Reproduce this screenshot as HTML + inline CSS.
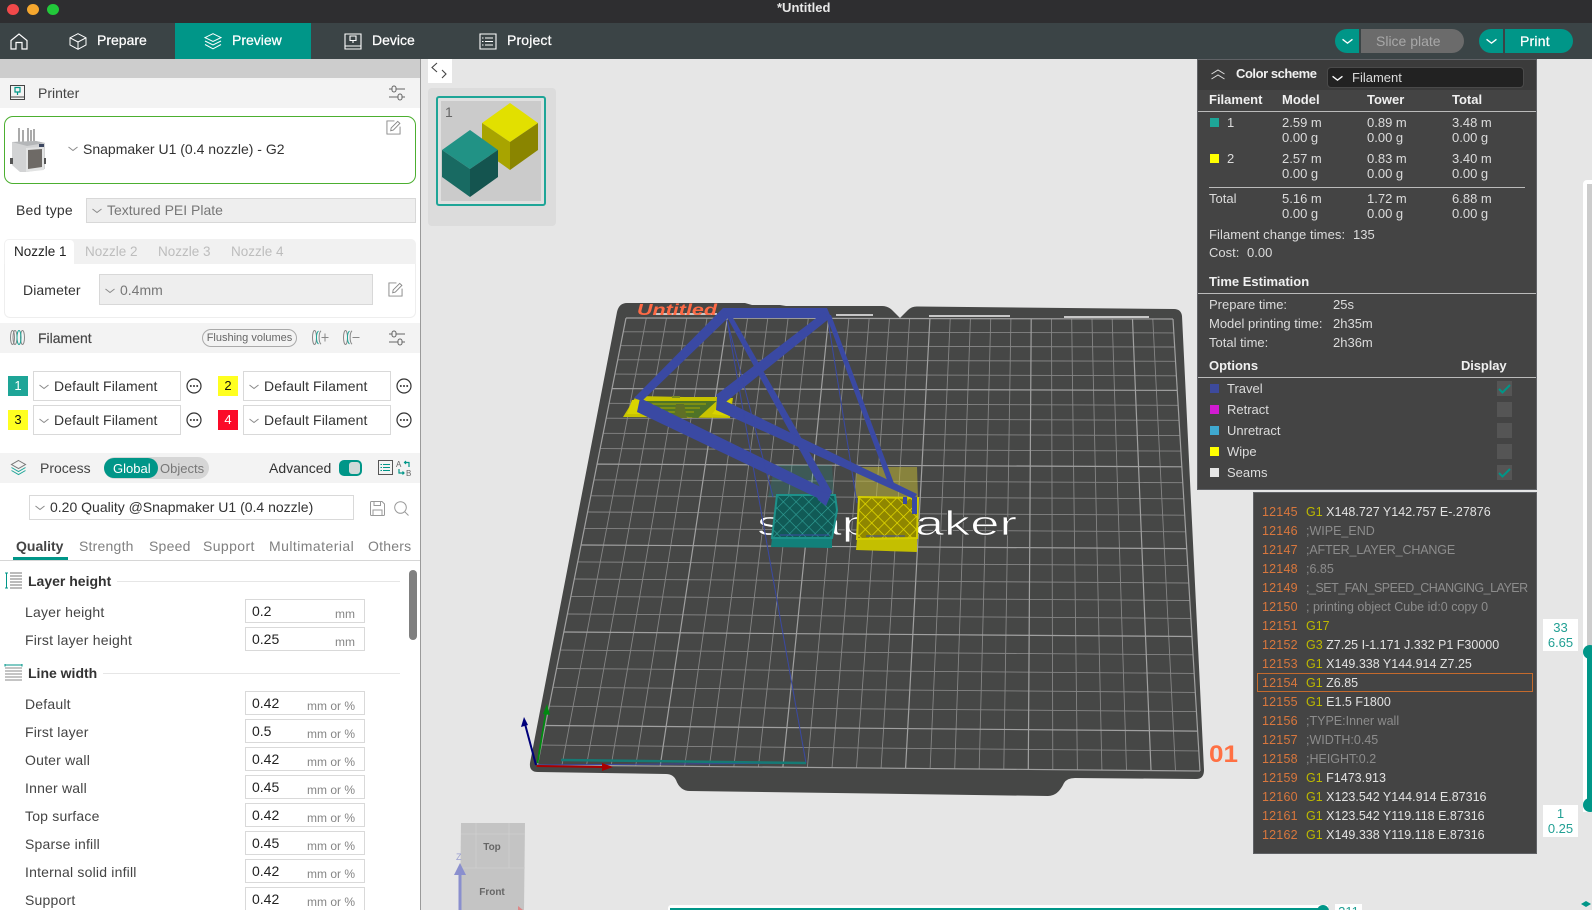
<!DOCTYPE html>
<html><head><meta charset="utf-8"><title>Untitled</title>
<style>
html,body{margin:0;padding:0;width:1592px;height:910px;overflow:hidden}
#r{position:absolute;left:0;top:0;width:1592px;height:910px;overflow:hidden;background:#e6e6e6;font-family:"Liberation Sans",sans-serif;font-size:14px;color:#333}
.a{position:absolute}
.t{position:absolute;white-space:nowrap;line-height:20px;height:20px}
.box{position:absolute;box-sizing:border-box;border:1px solid #d9d9d9;background:#fff}
.w{color:#fff;-webkit-text-stroke:.25px #fff}
.s{position:absolute;overflow:visible}
.tab{color:#bdbdbd;font-size:13.5px}
.nav{font-size:14px}
.r{font-size:13px;color:#dcdcdc}
.b{font-weight:bold;color:#f0f0f0}
.sw{position:absolute;width:9px;height:9px}
.cb{position:absolute;width:15px;height:15px;background:#555;left:1497px}
.g{position:absolute;left:1262px;font-size:12.5px;line-height:18px;height:18px;white-space:nowrap;color:#e2e2e2}
.g i{font-style:normal;color:#d9773d;display:inline-block;width:44px;letter-spacing:.2px}
.g b{font-weight:normal;color:#bdb800}
.g u{text-decoration:none;color:#8c8c8c}
.lbl{position:absolute;left:25px;white-space:nowrap;line-height:20px;color:#444;letter-spacing:.2px}
.fb{position:absolute;left:245px;width:120px;height:24px;box-sizing:border-box;border:1px solid #d9d9d9;background:#fff;color:#222;line-height:22px;padding-left:6px}
.fb span{position:absolute;right:9px;top:3px;font-size:12px;color:#858585}
.num{position:absolute;width:20px;height:20px;text-align:center;line-height:20px;font-size:13px}
.ti{color:#808080;letter-spacing:.22px}
</style></head><body><div id="r">
<svg width="0" height="0" style="position:absolute"><defs>
<symbol id="chev" viewBox="0 0 10 6"><path d="M.5 1 5 4.5 9.5 1" fill="none" stroke="#8a8a8a" stroke-width="1"/></symbol>
<symbol id="cw" viewBox="0 0 10 6"><path d="M.5 1 5 4.500 9.5 1" fill="none" stroke="#fff" stroke-width="1.2"/></symbol>
<symbol id="set" viewBox="0 0 16 16"><g fill="none" stroke="#666" stroke-width="1"><path d="M0 4H3M7 4H16M0 12H9M13 12H16"/><rect x="3" y="1" width="4" height="6" rx="2"/><rect x="9" y="9" width="4" height="6" rx="2"/></g></symbol>
<symbol id="more" viewBox="0 0 16 16"><circle cx="8" cy="8" r="7" fill="none" stroke="#333" stroke-width="1.2"/><circle cx="4.8" cy="8" r="1" fill="#333"/><circle cx="8" cy="8" r="1" fill="#333"/><circle cx="11.2" cy="8" r="1" fill="#333"/></symbol>
<symbol id="edit" viewBox="0 0 16 16"><path d="M9 1H1V15H15V7" fill="none" stroke="#888"/><path d="M5 11.5 5.5 8.5 12.5 1.5 14.8 3.6 7.8 10.8Z" fill="none" stroke="#888"/></symbol>
<pattern id="ht" width="9" height="9" patternUnits="userSpaceOnUse" patternTransform="translate(777 495) rotate(45)"><rect width="9" height="9" fill="#115a56"/><path d="M0 0H9M0 0V9" stroke="#2f9f96" stroke-width="1.2"/></pattern>
<pattern id="hy" width="9" height="9" patternUnits="userSpaceOnUse" patternTransform="translate(859 497) rotate(45)"><rect width="9" height="9" fill="#8f8600"/><path d="M0 0H9M0 0V9" stroke="#e6dc00" stroke-width="1.4"/></pattern>
</defs></svg>

<!-- title bar -->
<div class="a" style="left:0;top:0;width:1592px;height:23px;background:#2e2e30"></div>
<div class="a" style="left:7px;top:4px;width:12px;height:11px;border-radius:50%;background:#f2494a"></div>
<div class="a" style="left:27px;top:4px;width:12px;height:11px;border-radius:50%;background:#f6a72e"></div>
<div class="a" style="left:47px;top:4px;width:12px;height:11px;border-radius:50%;background:#22c93a"></div>
<div class="t" style="left:777px;top:-2px;color:#e8e8e8;font-weight:bold;font-size:13px">*Untitled</div>

<!-- toolbar -->
<div class="a" style="left:0;top:23px;width:1592px;height:36px;background:#3b4446"></div>
<div class="a" style="left:175px;top:23px;width:136px;height:36px;background:#009688"></div>
<svg class="s" style="left:10px;top:33px" width="18" height="17" viewBox="0 0 18 17"><path d="M1 7.5 9 1l8 6.500V16h-5V9.5H6V16H1Z" fill="none" stroke="#fff" stroke-width="1.2"/></svg>
<svg class="s" style="left:69px;top:33px" width="18" height="17" viewBox="0 0 18 17"><path d="M9 .7 17 4.8V12L9 16.3 1 12V4.8ZM1 4.8 9 9l8-4.200M9 9v7.3" fill="none" stroke="#fff" stroke-width="1"/></svg>
<div class="t nav w" style="left:97px;top:30px">Prepare</div>
<svg class="s" style="left:204px;top:33px" width="18" height="17" viewBox="0 0 18 17"><path d="M9 .7 17 4.600 9 8.500 1 4.600ZM1 8 9 12l8-4M1 11.5 9 15.800l8-4.300" fill="none" stroke="#fff" stroke-width="1"/></svg>
<div class="t nav w" style="left:232px;top:30px">Preview</div>
<svg class="s" style="left:344px;top:33px" width="18" height="17" viewBox="0 0 18 17"><path d="M1 1H17V16H1ZM1 13H17M6 3H12V7.5H6ZM9 7.5V10" fill="none" stroke="#fff" stroke-width="1.1"/></svg>
<div class="t nav w" style="left:372px;top:30px">Device</div>
<svg class="s" style="left:479px;top:33px" width="18" height="17" viewBox="0 0 18 17"><path d="M1 1H17V16H1ZM6 5H14M6 8.500H14M6 12H14M3 5H4.500M3 8.500H4.500M3 12H4.500" fill="none" stroke="#fff" stroke-width="1.1"/></svg>
<div class="t nav w" style="left:507px;top:30px;letter-spacing:.15px">Project</div>

<div class="a" style="left:1335px;top:29px;width:24px;height:24px;border-radius:12px 0 0 12px;background:#009688"></div>
<svg class="s" style="left:1342px;top:38px" width="11" height="7"><use href="#cw"/></svg>
<div class="a" style="left:1361px;top:29px;width:103px;height:24px;border-radius:0 12px 12px 0;background:#6b6b6b"></div>
<div class="t" style="left:1376px;top:31px;color:#a8a8a8;font-size:14px">Slice plate</div>
<div class="a" style="left:1479px;top:29px;width:24px;height:24px;border-radius:12px 0 0 12px;background:#009688"></div>
<svg class="s" style="left:1486px;top:38px" width="11" height="7"><use href="#cw"/></svg>
<div class="a" style="left:1505px;top:29px;width:68px;height:24px;border-radius:0 12px 12px 0;background:#009688"></div>
<div class="t w" style="left:1520px;top:31px;letter-spacing:.2px">Print</div>

<!-- left panel -->
<div class="a" style="left:0;top:59px;width:420px;height:851px;background:#fff;border-right:1px solid #9a9a9a"></div>
<div class="a" style="left:0;top:59px;width:420px;height:19px;background:#cdcdcd"></div>
<div class="a" style="left:0;top:78px;width:420px;height:30px;background:#f3f3f3"></div>
<svg class="s" style="left:10px;top:85px" width="15" height="15" viewBox="0 0 15 15"><path d="M.5.5H14.5V14.5H.5ZM.5 12H14.5" fill="none" stroke="#444"/><path d="M5 2.500H10V7H5ZM7.500 7V10" fill="none" stroke="#009688" stroke-width="1.2"/></svg>
<div class="t" style="left:38px;top:83px;color:#444">Printer</div>
<svg class="s" style="left:389px;top:85px" width="16" height="16"><use href="#set"/></svg>

<div class="a" style="left:4px;top:116px;width:412px;height:68px;box-sizing:border-box;border:1.5px solid #4caf30;border-radius:9px;background:#fff"></div>
<svg class="s" style="left:10px;top:127px" width="36" height="46" viewBox="0 0 36 46">
<path d="M9 1V16M13 3V16M18 1V16M21 3V16M24 2V16" stroke="#555" stroke-width="1"/>
<path d="M2 15 26 14 35 16V42L17 45H10L2 38Z" fill="#d2d3d4"/><path d="M16 21 34 20V43L16 45Z" fill="#e2e3e3"/><path d="M18 23 32 22V40L18 42Z" fill="#6e6a66"/><path d="M2 15 26 14 35 16 17 19Z" fill="#b4b6b8"/><path d="M29 17H34V20H29Z" fill="#3c4760"/><path d="M0 31H3V37H0ZM34 31H36V37H34Z" fill="#555"/></svg>
<svg class="s" style="left:68px;top:146px" width="10" height="6"><use href="#chev"/></svg>
<div class="t" style="left:83px;top:139px;color:#333">Snapmaker U1 (0.4 nozzle) - G2</div>
<svg class="s" style="left:386px;top:120px" width="15" height="15"><use href="#edit"/></svg>

<div class="t" style="left:16px;top:200px;color:#333;letter-spacing:.2px">Bed type</div>
<div class="a" style="left:86px;top:198px;width:330px;height:25px;box-sizing:border-box;background:#eee;border:1px solid #d8d8d8"></div>
<svg class="s" style="left:92px;top:208px" width="10" height="6"><use href="#chev"/></svg>
<div class="t" style="left:107px;top:200px;color:#777">Textured PEI Plate</div>

<div class="a" style="left:4px;top:239px;width:412px;height:26px;background:#f1f1f1;border-radius:5px 5px 0 0"></div>
<div class="a" style="left:4px;top:264px;width:412px;height:54px;box-sizing:border-box;border:1px solid #eee;border-top:0;border-radius:0 0 6px 6px;background:#fff"></div>
<div class="a" style="left:5px;top:240px;width:69px;height:25px;background:#fff;border-radius:4px 4px 0 0"></div>
<div class="t tab" style="left:14px;top:242px;color:#222">Nozzle 1</div>
<div class="t tab" style="left:85px;top:242px">Nozzle 2</div>
<div class="t tab" style="left:158px;top:242px">Nozzle 3</div>
<div class="t tab" style="left:231px;top:242px">Nozzle 4</div>
<div class="t" style="left:23px;top:280px;color:#333;letter-spacing:.1px">Diameter</div>
<div class="a" style="left:99px;top:274px;width:274px;height:31px;box-sizing:border-box;background:#eee;border:1px solid #d8d8d8"></div>
<svg class="s" style="left:105px;top:288px" width="10" height="6"><use href="#chev"/></svg>
<div class="t" style="left:120px;top:280px;color:#777">0.4mm</div>
<svg class="s" style="left:388px;top:282px" width="15" height="15"><use href="#edit"/></svg>

<!-- filament -->
<div class="a" style="left:0;top:323px;width:420px;height:30px;background:#f3f3f3"></div>
<svg class="s" style="left:10px;top:330px" width="15" height="15" viewBox="0 0 15 15"><g fill="none" stroke="#888"><ellipse cx="2.500" cy="7.500" rx="2" ry="7"/><ellipse cx="12.500" cy="7.500" rx="2" ry="7"/><ellipse cx="5" cy="7.500" rx="2" ry="7"/></g><ellipse cx="9" cy="7.500" rx="2" ry="7" fill="none" stroke="#1ea597"/></svg>
<div class="t" style="left:38px;top:328px;color:#444;-webkit-text-stroke:.15px #444">Filament</div>
<div class="a" style="left:202px;top:329px;width:95px;height:18px;box-sizing:border-box;border:1px solid #aaa;border-radius:9px;background:#f3f3f3;font-size:11px;color:#666;text-align:center;line-height:16px">Flushing volumes</div>
<svg class="s" style="left:312px;top:330px" width="17" height="15" viewBox="0 0 17 15"><g fill="none" stroke="#888"><ellipse cx="2.500" cy="7.500" rx="2" ry="7"/><path d="M9 .8C6.500 3 6.500 12 9 14.200"/><path d="M9.500 7.500H16.500M13 3.500V11.500"/></g><path d="M6.500 1C3.800 3 3.800 12 6.500 14" fill="none" stroke="#1ea597"/></svg>
<svg class="s" style="left:343px;top:330px" width="17" height="15" viewBox="0 0 17 15"><g fill="none" stroke="#888"><ellipse cx="2.500" cy="7.500" rx="2" ry="7"/><path d="M9 .8C6.500 3 6.500 12 9 14.200"/><path d="M9.500 7.500H16.500"/></g><path d="M6.500 1C3.800 3 3.800 12 6.500 14" fill="none" stroke="#1ea597"/></svg>
<svg class="s" style="left:389px;top:330px" width="16" height="16"><use href="#set"/></svg>

<div class="num" style="left:8px;top:376px;background:#1ea597;color:#fff">1</div>
<div class="box" style="left:33px;top:371px;width:148px;height:30px"></div>
<svg class="s" style="left:39px;top:384px" width="10" height="6"><use href="#chev"/></svg>
<div class="t" style="left:54px;top:376px;letter-spacing:.1px">Default Filament</div>
<svg class="s" style="left:186px;top:378px" width="16" height="16"><use href="#more"/></svg>
<div class="num" style="left:218px;top:376px;background:#ffff20;color:#111">2</div>
<div class="box" style="left:243px;top:371px;width:148px;height:30px"></div>
<svg class="s" style="left:249px;top:384px" width="10" height="6"><use href="#chev"/></svg>
<div class="t" style="left:264px;top:376px;letter-spacing:.1px">Default Filament</div>
<svg class="s" style="left:396px;top:378px" width="16" height="16"><use href="#more"/></svg>
<div class="num" style="left:8px;top:410px;background:#ffff20;color:#111">3</div>
<div class="box" style="left:33px;top:405px;width:148px;height:30px"></div>
<svg class="s" style="left:39px;top:418px" width="10" height="6"><use href="#chev"/></svg>
<div class="t" style="left:54px;top:410px;letter-spacing:.1px">Default Filament</div>
<svg class="s" style="left:186px;top:412px" width="16" height="16"><use href="#more"/></svg>
<div class="num" style="left:218px;top:410px;background:#fb0a28;color:#fff">4</div>
<div class="box" style="left:243px;top:405px;width:148px;height:30px"></div>
<svg class="s" style="left:249px;top:418px" width="10" height="6"><use href="#chev"/></svg>
<div class="t" style="left:264px;top:410px;letter-spacing:.1px">Default Filament</div>
<svg class="s" style="left:396px;top:412px" width="16" height="16"><use href="#more"/></svg>

<!-- process -->
<div class="a" style="left:0;top:453px;width:420px;height:30px;background:#f3f3f3"></div>
<svg class="s" style="left:11px;top:460px" width="15" height="15" viewBox="0 0 15 15"><path d="M7.500.5 14.500 4.500 7.500 8.500 .5 4.500Z" fill="none" stroke="#777"/><path d="M.5 7.500 7.500 11.500 14.500 7.500M.5 10.500 7.500 14.500 14.500 10.500" fill="none" stroke="#1ea597"/></svg>
<div class="t" style="left:40px;top:458px;color:#444">Process</div>
<div class="a" style="left:104px;top:457px;width:105px;height:22px;border-radius:11px;background:#d6d6d6"></div>
<div class="a" style="left:104px;top:458px;width:54px;height:20px;border-radius:10px;background:#009688"></div>
<div class="t" style="left:113px;top:459px;color:#fff;font-size:13px">Global</div>
<div class="t" style="left:160px;top:459px;color:#777;font-size:13px">Objects</div>
<div class="t" style="left:269px;top:458px;color:#333">Advanced</div>
<div class="a" style="left:339px;top:460px;width:23px;height:16px;border-radius:5px;background:#009688"></div>
<div class="a" style="left:349px;top:462px;width:11px;height:12px;border-radius:3px;background:#d0dad9"></div>
<svg class="s" style="left:378px;top:460px" width="15" height="15" viewBox="0 0 15 15"><path d="M.5.5H14.5V14.5H.5Z" fill="none" stroke="#555"/><path d="M5 4.500H12M5 7.500H12M5 10.500H12M2.500 4.500H4M2.500 7.500H4M2.500 10.500H4" fill="none" stroke="#009688"/></svg>
<svg class="s" style="left:396px;top:460px" width="16" height="16" viewBox="0 0 16 16"><text x="0" y="7" font-size="8" fill="#666" font-family="Liberation Sans">A</text><text x="10" y="16" font-size="8" fill="#666" font-family="Liberation Sans">B</text><path d="M13 7V2.500H8.500M10 1 8.500 2.500 10 4M3 9V13H8M6.500 11.500 8 13 6.500 14.500" fill="none" stroke="#009688" stroke-width="1.2"/></svg>

<div class="box" style="left:29px;top:495px;width:325px;height:25px"></div>
<svg class="s" style="left:35px;top:505px" width="10" height="6"><use href="#chev"/></svg>
<div class="t" style="left:50px;top:497px;color:#333">0.20 Quality @Snapmaker U1 (0.4 nozzle)</div>
<svg class="s" style="left:370px;top:501px" width="15" height="15" viewBox="0 0 15 15"><path d="M.5 1.500Q.5.5 1.500.5H12L14.500 3V13.500Q14.500 14.500 13.500 14.500H1.500Q.5 14.500 .5 13.500ZM4 .5V4.500H10.500V.5M3 14.500V9H12V14.500" fill="none" stroke="#999"/></svg>
<svg class="s" style="left:394px;top:501px" width="15" height="15" viewBox="0 0 15 15"><circle cx="6.500" cy="6.500" r="5.800" fill="none" stroke="#999"/><path d="M10.700 10.700 14.500 14.500" stroke="#999"/></svg>

<div class="t" style="left:16px;top:536px;font-weight:bold;color:#444">Quality</div>
<div class="t ti" style="left:79px;top:536px">Strength</div>
<div class="t ti" style="left:149px;top:536px">Speed</div>
<div class="t ti" style="left:203px;top:536px;letter-spacing:.4px">Support</div>
<div class="t ti" style="left:269px;top:536px;letter-spacing:.45px">Multimaterial</div>
<div class="t ti" style="left:368px;top:536px">Others</div>
<div class="a" style="left:0;top:560px;width:420px;height:1px;background:#d6d6d6"></div>
<div class="a" style="left:13px;top:557px;width:55px;height:3px;background:#009688"></div>

<svg class="s" style="left:5px;top:572px" width="17" height="17" viewBox="0 0 17 17"><path d="M5 1H17M5 4H17M5 7H17M5 10H17M5 13H17M5 16H17" stroke="#777"/><path d="M0 1H3M1.500 1V16M0 16H3" stroke="#009688" fill="none"/></svg>
<div class="t" style="left:28px;top:571px;font-weight:bold;color:#333">Layer height</div>
<div class="a" style="left:117px;top:581px;width:283px;height:1px;background:#e6e6e6"></div>
<div class="a" style="left:409px;top:570px;width:8px;height:70px;border-radius:4px;background:#808080"></div>

<div class="lbl" style="top:602px">Layer height</div>
<div class="fb" style="top:599px">0.2<span>mm</span></div>
<div class="lbl" style="top:630px">First layer height</div>
<div class="fb" style="top:627px">0.25<span>mm</span></div>

<svg class="s" style="left:5px;top:664px" width="17" height="17" viewBox="0 0 17 17"><path d="M0 1H17M0 0V2.500M17 0V2.500" stroke="#009688" fill="none"/><path d="M0 4H17M0 7H17M0 10H17M0 13H17M0 16H17" stroke="#888"/></svg>
<div class="t" style="left:28px;top:663px;font-weight:bold;color:#333">Line width</div>
<div class="a" style="left:103px;top:673px;width:297px;height:1px;background:#e6e6e6"></div>

<div class="lbl" style="top:694px">Default</div><div class="fb" style="top:691px">0.42<span>mm or %</span></div>
<div class="lbl" style="top:722px">First layer</div><div class="fb" style="top:719px">0.5<span>mm or %</span></div>
<div class="lbl" style="top:750px">Outer wall</div><div class="fb" style="top:747px">0.42<span>mm or %</span></div>
<div class="lbl" style="top:778px">Inner wall</div><div class="fb" style="top:775px">0.45<span>mm or %</span></div>
<div class="lbl" style="top:806px">Top surface</div><div class="fb" style="top:803px">0.42<span>mm or %</span></div>
<div class="lbl" style="top:834px">Sparse infill</div><div class="fb" style="top:831px">0.45<span>mm or %</span></div>
<div class="lbl" style="top:862px">Internal solid infill</div><div class="fb" style="top:859px">0.42<span>mm or %</span></div>
<div class="lbl" style="top:890px">Support</div><div class="fb" style="top:887px">0.42<span>mm or %</span></div>

<!-- plate list -->
<div class="a" style="left:428px;top:59px;width:24px;height:24px;background:#fff"></div>
<svg class="s" style="left:0;top:0" width="460" height="90" viewBox="0 0 460 90"><path d="M437 63 432 67.500 437 72M442 70 446 74 442 78" fill="none" stroke="#444" stroke-width="1.1"/></svg>
<div class="a" style="left:428px;top:88px;width:128px;height:138px;border-radius:4px;background:#dcdcdc"></div>
<div class="a" style="left:436px;top:96px;width:110px;height:110px;box-sizing:border-box;border:2px solid #1ea597;border-radius:3px;background:#e0e0e0"></div>
<div class="a" style="left:441px;top:101px;width:100px;height:100px;background:#cbcbcb"></div>
<div class="t" style="left:445px;top:102px;color:#666;font-size:14px">1</div>
<svg class="s" style="left:0;top:0;pointer-events:none" width="600" height="230" viewBox="0 0 600 230">
<path d="M510 103 538 123 510 142 482 123Z" fill="#e2e000"/><path d="M482 123 510 142V170L482 150Z" fill="#a8a400"/><path d="M538 123V150L510 170V142Z" fill="#8a8500"/>
<path d="M470 130 498 150 470 169 442 150Z" fill="#219285"/><path d="M442 150 470 169V197L442 177Z" fill="#186a62"/><path d="M498 150V177L470 197V169Z" fill="#14544f"/>
</svg>

<!-- bed -->
<svg class="s" style="left:0;top:0" width="1592" height="910" viewBox="0 0 1592 910">
<path d="M627 303H745L752 305H780L786 306H882Q888 306 892 310L900 318L908 310Q912 306 918 306.500L1174 309Q1181 309 1182 316L1204 770Q1204 779 1196 779L1075 778Q1067 778 1064 783Q1058 796 1048 796L690 791Q680 791 676 780Q673 774 666 774L538 772Q529 772 530 763L617 312Q619 303 627 303Z" fill="#464746"/>
<path d="M655 314H717M836 315H873M929 316H1010M1064 317H1149" stroke="#f2f2f2" stroke-width="1.6"/>
<g stroke="#858585" stroke-width=".9" fill="none">
<path d="M646.300 318 562 765M666.500 318 586.600 765M686.800 318 611.100 766M707 318 635.700 766M747.600 318 684.700 766M767.800 318 709.300 767M788.100 318 733.800 767M808.300 318 758.400 767M848.900 318 807.400 767M869.100 319 832 768M889.400 319 856.500 768M909.600 319 881.100 768M950.200 319 930.100 769M970.400 319 954.700 769M990.700 319 979.200 769M1010.900 319 1003.800 769M1051.500 319 1052.800 770M1071.700 319 1077.400 770M1092 319 1101.900 770M1112.200 319 1126.500 770M1152.800 319 1175.500 771"/>
<path d="M623.300 331.800 1173.800 332.900M620.500 345.700 1174.700 347M617.700 359.800 1175.500 361.300M614.900 374.100 1176.400 375.800M609.100 403.300 1178.200 405.300M606.200 418.200 1179.100 420.300M603.200 433.300 1180 435.600M600.100 448.600 1180.900 451.100M594 479.900 1182.800 482.700M590.800 495.800 1183.700 498.800M587.600 512 1184.700 515.200M584.300 528.400 1185.700 531.800M577.700 561.900 1187.700 565.600M574.300 579 1188.800 583M570.900 596.400 1189.800 600.500M567.400 614 1190.900 618.400M560.300 650.100 1193.100 654.800M556.600 668.500 1194.200 673.400M552.900 687.300 1195.300 692.400M549.100 706.200 1196.500 711.600M541.400 745.100 1198.800 750.900"/>
</g>
<g stroke="#a0a0a0" stroke-width="1.2" fill="none">
<path d="M626 318 537.500 765M727.300 318 660.200 766M828.600 318 782.900 767M929.900 319 905.600 768M1031.200 319 1028.300 769M1132.500 319 1151 770M1173 319 1200 771"/>
<path d="M626 318 1173 319M612 388.600 1177.300 390.400M597.100 464.100 1181.800 466.800M581 545 1186.700 548.600M563.800 632 1192 636.500M545.300 725.500 1197.600 731.100M537.500 765 1200 771"/>
</g>
<text x="637" y="315" font-family="Liberation Sans" font-weight="bold" font-style="italic" font-size="16" fill="#ff6a45" textLength="80" lengthAdjust="spacingAndGlyphs">Untitled</text>
<text x="757" y="535" font-family="Liberation Sans" font-size="34" fill="#fff" stroke="#464746" stroke-width=".7" paint-order="fill" textLength="260" lengthAdjust="spacingAndGlyphs">snapmaker</text>
<text x="1209" y="762" font-family="Liberation Sans" font-weight="bold" font-size="24" fill="#ff7043" textLength="29" lengthAdjust="spacingAndGlyphs">01</text>

<!-- ghost boxes -->
<path d="M775 465H832L834 497H768Z" fill="#1e9a90" fill-opacity=".22"/>
<path d="M857 467H917L918 498H855Z" fill="#c9c033" fill-opacity=".5"/>

<!-- raft -->
<path d="M636 396 733 398 730 418 623 417Z" fill="#c8c400"/>
<path d="M640 400H632L627 414H646ZM722 402 731 400 728 416 712 414Z" fill="#d8d400"/>
<path d="M638 398 720 398 698 418 652 413Z" fill="#4f7327"/>
<path d="M640 397H720V401H640Z" fill="#c6c200"/>
<path d="M648 404H706M654 408H700M660 412H694" stroke="#aaa800" stroke-width="1"/>
<path d="M676 404 684 404 687 418H674Z" fill="#5f6f26"/>
<path d="M672 396H680V398H672Z" fill="#7a8a20"/>

<!-- cubes -->
<path d="M772 538 832 538 832 548 771 547Z" fill="#12807a"/>
<path d="M777 495 835 495 837 510 832 538 772 538Z" fill="url(#ht)" stroke="#1d918a" stroke-width="2"/>
<path d="M857 539 917 538 917 552 856 550Z" fill="#c4bf00"/>
<path d="M859 497 918 498 917 538 857 539Z" fill="url(#hy)" stroke="#d2cc00" stroke-width="2"/>

<!-- travel -->
<g fill="#3a49a3">
<path d="M723 308 827 308 830 315 825 318 727 318Z"/>
<path d="M634 398 723 308 729 317 642 401Z"/>
<path d="M716 395 824 312 830 318 722 405Z"/>
<path d="M727 317 732 316 832 492 826 498Z"/>
<path d="M826 315 831 315 895 486 890 488Z"/>
<path d="M640 398 831 492 826 502 637 412Z"/>
<path d="M717 397 917 494 914 499 716 410Z"/>
<path d="M815 490 831 494 826 506 818 500Z"/>
<path d="M903 497H907V504H903ZM912 497H917V514H912Z"/>
</g>
<g stroke="#3a49a3" stroke-width="1" fill="none">
<path d="M727 320 806 763M828 320 857 503M727 320 773 497M806 763 537 765M780 535H829M866 536H905"/>
</g>
<path d="M561 760 806 763" stroke="#167a74" stroke-width="2.500"/>

<!-- axes -->
<path d="M536 765 525 724" stroke="#00007a" stroke-width="2"/><path d="M524 717 521 727 528 725Z" fill="#00007a"/>
<path d="M537.500 763 546 712" stroke="#008a10" stroke-width="1.800"/><path d="M547 704 543 714 550 715Z" fill="#008a10"/>
<path d="M536.600 766 604 767" stroke="#a80000" stroke-width="2"/><path d="M613 767 602 763 602 771Z" fill="#a80000"/>

<!-- navigator -->
<path d="M461 823H525L524 910H460Z" fill="#c4c4c4"/>
<path d="M461 834H525M461 868H525M476 823V868M509 823V868" stroke="#d0d0d0" stroke-width=".7"/>
<text x="492" y="850" font-family="Liberation Sans" font-size="10" font-weight="bold" fill="#666" text-anchor="middle">Top</text>
<text x="492" y="895" font-family="Liberation Sans" font-size="10" font-weight="bold" fill="#666" text-anchor="middle">Front</text>
<path d="M460 875V910" stroke="#8a8fce" stroke-width="3"/><path d="M460 863 454 875H466Z" fill="#8a8fce"/>
<text x="456" y="860" font-family="Liberation Sans" font-size="9" fill="#9a9fd0">Z</text>
<path d="M518 906 523 910H518Z" fill="#d88"/>
</svg>

<!-- right sliders -->
<div class="a" style="left:1583px;top:180px;width:9px;height:730px;background:#fff;border-radius:4px 0 0 0"></div>
<div class="a" style="left:1587px;top:184px;width:5px;height:468px;background:#ccc"></div>
<div class="a" style="left:1587px;top:652px;width:5px;height:153px;background:#009688"></div>
<div class="a" style="left:1583px;top:645px;width:14px;height:14px;border-radius:50%;background:#009688"></div>
<div class="a" style="left:1583px;top:798px;width:14px;height:14px;border-radius:50%;background:#009688"></div>
<div class="a" style="left:1583px;top:812px;width:9px;height:98px;background:#e6e6e6"></div>
<div class="a" style="left:1543px;top:619px;width:35px;height:32px;background:#fff;color:#22a094;font-size:13px;line-height:15px;text-align:center;padding-top:1px;box-sizing:border-box">33<br>6.65</div>
<div class="a" style="left:1543px;top:805px;width:35px;height:32px;background:#fff;color:#22a094;font-size:13px;line-height:15px;text-align:center;padding-top:1px;box-sizing:border-box">1<br>0.25</div>
<div class="a" style="left:668px;top:905px;width:660px;height:5px;background:#fff;border-radius:3px 0 0 0"></div>
<div class="a" style="left:670px;top:908px;width:654px;height:2px;background:#009688"></div>
<div class="a" style="left:1317px;top:905px;width:12px;height:12px;border-radius:50%;background:#009688"></div>
<div class="a" style="left:1335px;top:904px;width:27px;height:6px;background:#fff;overflow:hidden;color:#22a094;font-size:13px;line-height:15px;text-align:center">211</div>
<svg class="s" style="left:1580px;top:900px" width="12" height="10" viewBox="0 0 12 10"><path d="M6 1 11 4 6 7 1 4Z" fill="#009688"/></svg>

<!-- color scheme panel -->
<div class="a" style="left:1197px;top:59px;width:340px;height:431px;box-sizing:border-box;background:#444;border:1px solid #606266"></div>
<div class="a" style="left:1198px;top:60px;width:338px;height:30px;background:#3b3b3b"></div>
<svg class="s" style="left:1211px;top:69px" width="14" height="11" viewBox="0 0 14 11"><path d="M.5 5 7 1l6.500 4M.5 10 7 6l6.500 4" fill="none" stroke="#ddd"/></svg>
<div class="t b" style="left:1236px;top:64px;font-size:13px;letter-spacing:-.45px">Color scheme</div>
<div class="a" style="left:1327px;top:67px;width:197px;height:21px;box-sizing:border-box;background:#222;border:1px solid #4a4a4a;border-radius:4px"></div>
<svg class="s" style="left:1332px;top:75px" width="11" height="7"><use href="#cw"/></svg>
<div class="t r" style="left:1352px;top:68px">Filament</div>

<div class="t b" style="left:1209px;top:90px;font-size:13px">Filament</div>
<div class="t b" style="left:1282px;top:90px;font-size:13px">Model</div>
<div class="t b" style="left:1367px;top:90px;font-size:13px">Tower</div>
<div class="t b" style="left:1452px;top:90px;font-size:13px">Total</div>
<div class="a" style="left:1198px;top:111px;width:338px;height:1px;background:#bbb"></div>

<div class="sw" style="left:1210px;top:118px;background:#1ea597"></div>
<div class="t r" style="left:1227px;top:113px">1</div>
<div class="t r" style="left:1282px;top:113px">2.59 m</div><div class="t r" style="left:1367px;top:113px">0.89 m</div><div class="t r" style="left:1452px;top:113px">3.48 m</div>
<div class="t r" style="left:1282px;top:128px">0.00 g</div><div class="t r" style="left:1367px;top:128px">0.00 g</div><div class="t r" style="left:1452px;top:128px">0.00 g</div>
<div class="sw" style="left:1210px;top:154px;background:#ff0"></div>
<div class="t r" style="left:1227px;top:149px">2</div>
<div class="t r" style="left:1282px;top:149px">2.57 m</div><div class="t r" style="left:1367px;top:149px">0.83 m</div><div class="t r" style="left:1452px;top:149px">3.40 m</div>
<div class="t r" style="left:1282px;top:164px">0.00 g</div><div class="t r" style="left:1367px;top:164px">0.00 g</div><div class="t r" style="left:1452px;top:164px">0.00 g</div>
<div class="a" style="left:1209px;top:187px;width:316px;height:1px;background:#bbb"></div>
<div class="t r" style="left:1209px;top:189px">Total</div>
<div class="t r" style="left:1282px;top:189px">5.16 m</div><div class="t r" style="left:1367px;top:189px">1.72 m</div><div class="t r" style="left:1452px;top:189px">6.88 m</div>
<div class="t r" style="left:1282px;top:204px">0.00 g</div><div class="t r" style="left:1367px;top:204px">0.00 g</div><div class="t r" style="left:1452px;top:204px">0.00 g</div>
<div class="t r" style="left:1209px;top:225px;letter-spacing:.08px">Filament change times:</div><div class="t r" style="left:1353px;top:225px">135</div>
<div class="t r" style="left:1209px;top:243px">Cost:</div><div class="t r" style="left:1247px;top:243px">0.00</div>
<div class="t b" style="left:1209px;top:272px;font-size:13px">Time Estimation</div>
<div class="a" style="left:1198px;top:293px;width:338px;height:1px;background:#bbb"></div>
<div class="t r" style="left:1209px;top:295px">Prepare time:</div><div class="t r" style="left:1333px;top:295px">25s</div>
<div class="t r" style="left:1209px;top:314px">Model printing time:</div><div class="t r" style="left:1333px;top:314px">2h35m</div>
<div class="t r" style="left:1209px;top:333px">Total time:</div><div class="t r" style="left:1333px;top:333px">2h36m</div>
<div class="t b" style="left:1209px;top:356px;font-size:13px">Options</div>
<div class="t b" style="left:1461px;top:356px;font-size:13px;letter-spacing:-.1px">Display</div>
<div class="a" style="left:1198px;top:377px;width:338px;height:1px;background:#bbb"></div>

<div class="sw" style="left:1210px;top:384px;background:#3d4a9c"></div><div class="t r" style="left:1227px;top:379px">Travel</div>
<div class="cb" style="top:381px"></div><svg class="s" style="left:1498px;top:384px" width="13" height="10" viewBox="0 0 13 10"><path d="M1 5 4.500 8.500 12 1" fill="none" stroke="#009688" stroke-width="2"/></svg>
<div class="sw" style="left:1210px;top:405px;background:#d21bd2"></div><div class="t r" style="left:1227px;top:400px">Retract</div>
<div class="cb" style="top:402px"></div>
<div class="sw" style="left:1210px;top:426px;background:#3fa9d0"></div><div class="t r" style="left:1227px;top:421px">Unretract</div>
<div class="cb" style="top:423px"></div>
<div class="sw" style="left:1210px;top:447px;background:#ff0"></div><div class="t r" style="left:1227px;top:442px">Wipe</div>
<div class="cb" style="top:444px"></div>
<div class="sw" style="left:1210px;top:468px;background:#e6e6e6"></div><div class="t r" style="left:1227px;top:463px">Seams</div>
<div class="cb" style="top:465px"></div><svg class="s" style="left:1498px;top:468px" width="13" height="10" viewBox="0 0 13 10"><path d="M1 5 4.500 8.500 12 1" fill="none" stroke="#009688" stroke-width="2"/></svg>

<!-- gcode -->
<div class="a" style="left:1253px;top:492px;width:284px;height:362px;box-sizing:border-box;background:#444;border:1px solid #606266"></div>
<div class="a" style="left:1257px;top:673px;width:276px;height:19px;box-sizing:border-box;border:1px solid #c46a2d"></div>
<div class="g" style="top:503px"><i>12145</i><b>G1</b> X148.727 Y142.757 E-.27876</div>
<div class="g" style="top:522px"><i>12146</i><u>;WIPE_END</u></div>
<div class="g" style="top:541px"><i>12147</i><u style="letter-spacing:-.15px">;AFTER_LAYER_CHANGE</u></div>
<div class="g" style="top:560px"><i>12148</i><u>;6.85</u></div>
<div class="g" style="top:579px"><i>12149</i><u style="letter-spacing:-.5px">;_SET_FAN_SPEED_CHANGING_LAYER</u></div>
<div class="g" style="top:598px"><i>12150</i><u>; printing object Cube id:0 copy 0</u></div>
<div class="g" style="top:617px"><i>12151</i><b>G17</b></div>
<div class="g" style="top:636px"><i>12152</i><b>G3</b> Z7.25 I-1.171 J.332 P1 F30000</div>
<div class="g" style="top:655px"><i>12153</i><b>G1</b> X149.338 Y144.914 Z7.25</div>
<div class="g" style="top:674px"><i>12154</i><b>G1</b> Z6.85</div>
<div class="g" style="top:693px"><i>12155</i><b>G1</b> E1.5 F1800</div>
<div class="g" style="top:712px"><i>12156</i><u>;TYPE:Inner wall</u></div>
<div class="g" style="top:731px"><i>12157</i><u>;WIDTH:0.45</u></div>
<div class="g" style="top:750px"><i>12158</i><u>;HEIGHT:0.2</u></div>
<div class="g" style="top:769px"><i>12159</i><b>G1</b> F1473.913</div>
<div class="g" style="top:788px"><i>12160</i><b>G1</b> X123.542 Y144.914 E.87316</div>
<div class="g" style="top:807px"><i>12161</i><b>G1</b> X123.542 Y119.118 E.87316</div>
<div class="g" style="top:826px"><i>12162</i><b>G1</b> X149.338 Y119.118 E.87316</div>
</div></body></html>
